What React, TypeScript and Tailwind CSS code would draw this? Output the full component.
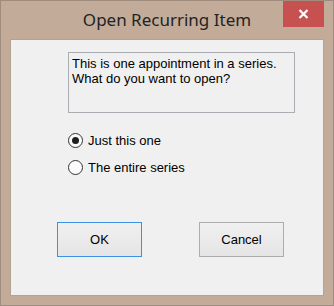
import React from "react";

const Radio = ({ label, checked }: { label: string; checked: boolean }) => {
  return (
    <label className="flex h-[27px] items-center gap-[5px]">
      <span className="flex h-[15px] w-[15px] items-center justify-center rounded-full border border-[#333333] bg-[#fcfcfc]">
        {checked && <span className="h-[7px] w-[7px] rounded-full bg-[#1f1f1f]" />}
      </span>
      <span className="text-[13px] leading-[15px] text-black">{label}</span>
    </label>
  );
};

const Button = ({ text, focused }: { text: string; focused?: boolean }) => {
  return (
    <button
      className={
        focused
          ? "flex h-[35px] w-[85px] items-center justify-center border border-[#3c91e6] bg-gradient-to-b from-[#f0f0f0] to-[#e5e5e5] text-[13px] text-black"
          : "flex h-[35px] w-[85px] items-center justify-center border border-[#adadad] bg-gradient-to-b from-[#f0f0f0] to-[#e5e5e5] text-[13px] text-black"
      }
    >
      {text}
    </button>
  );
};

export default function App() {
  return (
    <div className="relative flex h-[306px] w-[334px] flex-col border border-[#9f8c7c] bg-[#c2ac99] font-['Liberation_Sans',Arial,sans-serif]">
      <div className="flex h-[38px] items-center justify-center pb-[1px]">
        <span className="font-['Noto_Sans',sans-serif] text-[17px] text-[#232323]">
          Open Recurring Item
        </span>
      </div>
      <div className="absolute right-[9px] top-0 flex h-[26px] w-[41px] items-center justify-center bg-[#c75050]">
        <svg width="11" height="10" viewBox="0 0 11 10">
          <path d="M1.5 1 L9.5 9 M9.5 1 L1.5 9" stroke="white" strokeWidth="2.2" />
        </svg>
      </div>
      <div className="mx-[9px] mb-[9px] flex flex-1 flex-col border border-[#b5a291] bg-[#f0f0f0]">
        <div className="ml-[57px] mt-[12px] h-[61px] w-[227px] border border-[#abadb3] px-[3px] pt-[3px] text-[13px] leading-[15px] text-black">
          This is one appointment in a series.
          <br />
          What do you want to open?
        </div>
        <div className="ml-[57px] mt-[14px] flex flex-col">
          <Radio label="Just this one" checked />
          <Radio label="The entire series" checked={false} />
        </div>
        <div className="ml-[46px] mt-[41px] flex gap-[57px]">
          <Button text="OK" focused />
          <Button text="Cancel" />
        </div>
      </div>
    </div>
  );
}
